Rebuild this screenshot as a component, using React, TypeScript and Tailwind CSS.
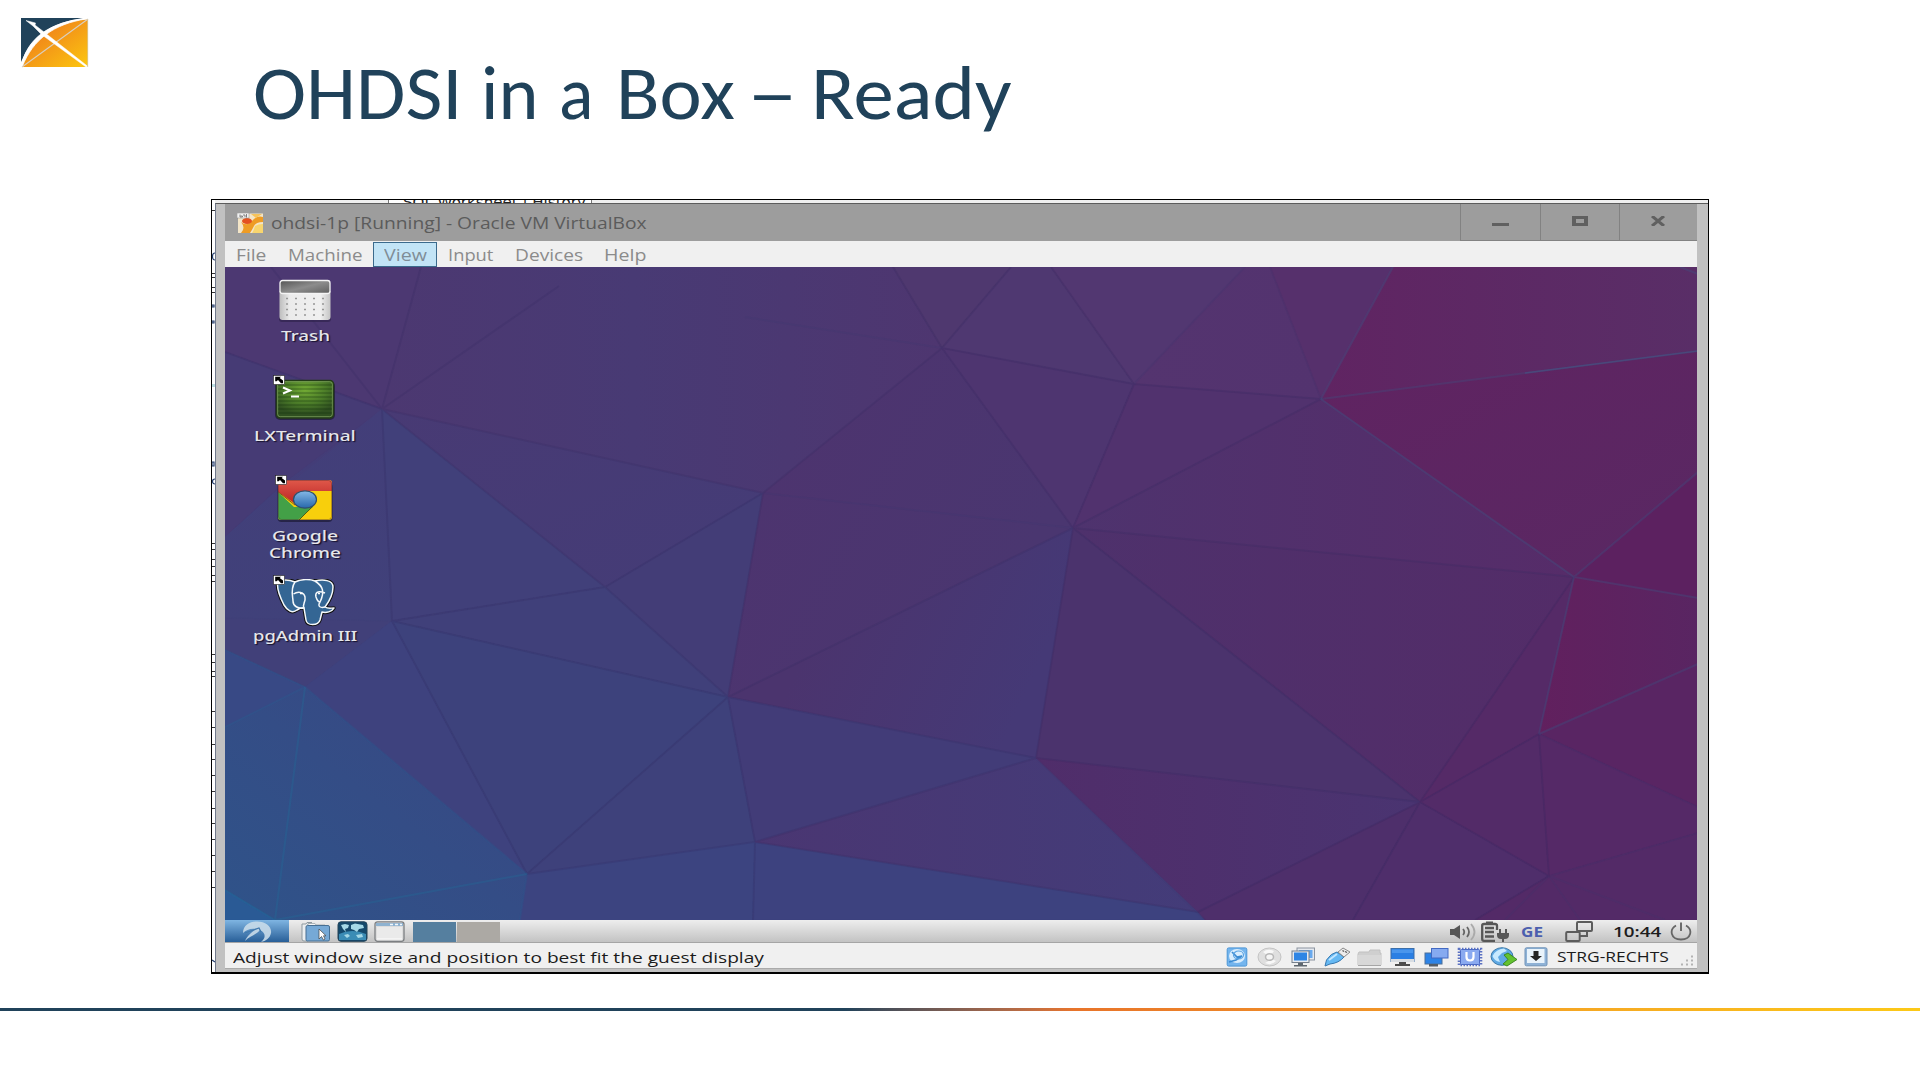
import { useLayoutEffect, useRef, useState } from "react";
import type { ReactNode } from "react";

/* A single line of text stretched horizontally to the width of its box. */
function Fit({ w, className = "", children }: { w: number; className?: string; children: ReactNode }) {
  const ref = useRef<HTMLSpanElement>(null);
  const [scale, setScale] = useState(1);
  useLayoutEffect(() => {
    if (ref.current) setScale(w / ref.current.offsetWidth);
  }, [w]);
  return (
    <span className={`block shrink-0 whitespace-nowrap ${className}`} style={{ width: w }}>
      <span ref={ref} className="inline-block origin-left" style={{ transform: `scaleX(${scale})` }}>
        {children}
      </span>
    </span>
  );
}

function Logo() {
  return (
    <svg width="68" height="50" viewBox="0 0 68 50" className="block">
      <defs>
        <linearGradient id="lg" x1="0" y1="0" x2="1" y2="1">
          <stop offset="0.2" stopColor="#ef7f1c" />
          <stop offset="1" stopColor="#fcc70f" />
        </linearGradient>
      </defs>
      <path d="M0 0H62Q15 6 0 44Z" fill="#20425a" />
      <path d="M1 49C7 22 28 4 67 1V49Z" fill="url(#lg)" />
      <path d="M0.5 48C5 22 28 3 66 0.8C32 6 12 22 1.5 48Z" fill="#fff" stroke="#fff" strokeWidth="0.8" />
      <path d="M1 49L67 1" stroke="#d9cfc2" strokeWidth="1.1" />
      <path d="M5 2.5L14.5 5L14 7L67 48.5L65 49L20.5 16.5L12 8Z" fill="#fff" stroke="#fff" strokeWidth="0.5" />
      <path d="M66.7 1V49" stroke="#d3c9a4" strokeWidth="0.8" />
    </svg>
  );
}

const FACETS: [string, string][] = [
  ["0,0 196,0 157,142 0,85", "#4c3872"],
  ["0,85 157,142 60,215 0,270", "#463b75"],
  ["157,142 167,354 0,351 0,270", "url(#gA)"],
  ["0,351 167,354 80,420 0,383", "#414079"],
  ["0,383 80,420 0,460", "#384985"],
  ["80,420 302,607 295,653 50,653 0,653 0,460", "url(#gB)"],
  ["0,623 50,653 0,653", "#2a5a95"],
  ["80,420 167,354 302,607", "#3e427e"],
  ["157,142 380,320 167,354", "#41407a"],
  ["157,142 538,226 380,320", "url(#gC)"],
  ["380,320 538,226 503,430", "#433d77"],
  ["167,354 380,320 503,430", "#40407a"],
  ["167,354 503,430 302,607", "#3d427c"],
  ["302,607 503,430 530,575", "#3e417b"],
  ["302,607 530,575 528,653 295,653", "#3c4480"],
  ["530,575 973,645 980,653 528,653", "#3d427f"],
  ["196,0 668,0 717,81 538,226 157,142", "url(#gD)"],
  ["668,0 786,0 717,81", "#4f386f"],
  ["786,0 826,0 909,117 717,81", "#4f3871"],
  ["826,0 1020,0 909,117", "#523771"],
  ["1020,0 1045,0 1096,132 909,117", "url(#gK)"],
  ["1045,0 1168,0 1096,132", "#56306c"],
  ["1168,0 1473,0 1473,84 1096,132", "url(#gE)"],
  ["1096,132 1473,84 1473,205 1349,310", "url(#gF)"],
  ["1349,310 1473,205 1473,331", "#5c2160"],
  ["1349,310 1473,331 1473,397 1314,467", "url(#gL)"],
  ["1314,467 1473,397 1473,540", "#592563"],
  ["538,226 717,81 848,261 503,430", "url(#gG)"],
  ["503,430 848,261 811,491", "url(#gH)"],
  ["503,430 811,491 530,575", "#423c78"],
  ["811,491 973,645 530,575", "url(#gM)"],
  ["717,81 909,117 848,261", "#4e3570"],
  ["909,117 1096,132 848,261", "#51326e"],
  ["848,261 1096,132 1349,310", "url(#gI)"],
  ["848,261 1349,310 1195,535", "url(#gN)"],
  ["848,261 1195,535 811,491", "#4b336d"],
  ["811,491 1195,535 973,645", "url(#gJ)"],
  ["973,645 1195,535 1128,653 980,653", "#4e2f6b"],
  ["1195,535 1324,609 1250,653 1128,653", "#4f2e6b"],
  ["1195,535 1349,310 1314,467", "#552a67"],
  ["1195,535 1314,467 1324,609", "#532b68"],
  ["1314,467 1473,540 1473,566 1324,609", "#552967"],
  ["1324,609 1473,566 1473,653 1250,653", "#532a67"],
];

const CREASES =
  "M157 142L46 0M157 142L196 0M157 142L334 19M157 142L0 85M157 142L538 226M157 142L380 320L503 430M157 142L167 354L380 320L538 226M167 354L503 430M167 354L302 607L503 430L530 575L302 607M530 575L528 653M530 575L811 491M530 575L973 645M503 430L538 226L717 81L668 0M717 81L786 0M717 81L909 117L826 0M909 117L1096 132L848 261L909 117M717 81L848 261L1349 310M848 261L1195 535L811 491L848 261L503 430L811 491M973 645L1195 535L1128 653M1349 310L1195 535L1314 467L1324 609L1195 535M1324 609L1250 653";

const FAINT_CREASES =
  "M717 81L520 50M848 261L538 226M1324 609L1280 653M1324 609L1355 653M1324 609L1440 653M811 491L980 653M1045 0L1096 132M1020 0L909 117M1314 467L1473 540M1324 609L1473 566";

const BLUE_CREASES =
  "M1168 0L1096 132L1349 310L1314 467M1349 310L1473 205M1349 310L1473 331M1314 467L1473 397M1455 0L1473 7";

function Wallpaper() {
  return (
    <svg width="1472" height="653" viewBox="0 0 1472 653" className="absolute inset-0">
      <defs>
        <linearGradient id="base" x1="0" y1="1" x2="1" y2="0">
          <stop offset="0" stopColor="#34508a" />
          <stop offset="0.5" stopColor="#483772" />
          <stop offset="1" stopColor="#5b2662" />
        </linearGradient>
        <linearGradient id="gA" x1="0" y1="0" x2="0" y2="1"><stop offset="0" stopColor="#433e79" /><stop offset="1" stopColor="#40417a" /></linearGradient>
        <linearGradient id="gB" x1="1" y1="0" x2="0" y2="1"><stop offset="0" stopColor="#394783" /><stop offset="1" stopColor="#2f5389" /></linearGradient>
        <linearGradient id="gC" x1="0" y1="0" x2="1" y2="1"><stop offset="0" stopColor="#483a74" /><stop offset="1" stopColor="#443c77" /></linearGradient>
        <linearGradient id="gD" x1="0" y1="0" x2="1" y2="0"><stop offset="0" stopColor="#4c3871" /><stop offset="0.45" stopColor="#483a74" /><stop offset="1" stopColor="#4e3670" /></linearGradient>
        <linearGradient id="gE" x1="0" y1="0" x2="1" y2="0"><stop offset="0" stopColor="#602462" /><stop offset="1" stopColor="#592e67" /></linearGradient>
        <linearGradient id="gF" x1="0" y1="0" x2="1" y2="1"><stop offset="0" stopColor="#602361" /><stop offset="1" stopColor="#592863" /></linearGradient>
        <linearGradient id="gG" gradientUnits="userSpaceOnUse" x1="540" y1="200" x2="780" y2="330"><stop offset="0" stopColor="#4d346f" /><stop offset="1" stopColor="#4a3670" /></linearGradient>
        <linearGradient id="gH" gradientUnits="userSpaceOnUse" x1="600" y1="340" x2="800" y2="430"><stop offset="0" stopColor="#4b346e" /><stop offset="1" stopColor="#453976" /></linearGradient>
        <linearGradient id="gI" x1="0" y1="0" x2="1" y2="0"><stop offset="0" stopColor="#4e336e" /><stop offset="1" stopColor="#562c69" /></linearGradient>
        <linearGradient id="gJ" x1="0" y1="0" x2="1" y2="0"><stop offset="0" stopColor="#502d6a" /><stop offset="1" stopColor="#4a3471" /></linearGradient>
        <linearGradient id="gK" x1="0" y1="0" x2="1" y2="0"><stop offset="0" stopColor="#54346f" /><stop offset="1" stopColor="#53336f" /></linearGradient>
        <linearGradient id="gL" x1="0" y1="0" x2="1" y2="0"><stop offset="0" stopColor="#61205e" /><stop offset="1" stopColor="#592562" /></linearGradient>
        <linearGradient id="gM" x1="0" y1="0" x2="1" y2="0"><stop offset="0" stopColor="#4a3672" /><stop offset="1" stopColor="#433c79" /></linearGradient>
        <linearGradient id="gN" x1="0" y1="0" x2="1" y2="0"><stop offset="0" stopColor="#4e316c" /><stop offset="1" stopColor="#532c68" /></linearGradient>
      </defs>
      <rect width="1473" height="653" fill="url(#base)" />
      {FACETS.map(([points, fill]) => (
        <polygon key={points} points={points} fill={fill} stroke={fill} strokeWidth="0.5" />
      ))}
      <g fill="none" strokeWidth="2">
        <path d={CREASES} stroke="#33285f" strokeOpacity="0.2" />
        <path d={FAINT_CREASES} stroke="#3a3a70" strokeOpacity="0.16" />
        <path d={BLUE_CREASES} stroke="#3d5583" strokeOpacity="0.34" />
        <path d="M1096 132L1473 84" stroke="#3d5583" strokeOpacity="0.3" />
        <path d="M1300 106L1473 84" stroke="#3f6690" strokeOpacity="0.4" strokeWidth="1.3" />
        <path d="M80 420L50 653L302 607M0 623L50 653" stroke="#1f709c" strokeOpacity="0.3" />
        <path d="M0 383L80 420L0 460M80 420L302 607L295 653" stroke="#22689a" strokeOpacity="0.18" />
      </g>
    </svg>
  );
}

function ShortcutMark() {
  return (
    <svg width="12" height="10" viewBox="0 0 12 10" className="absolute left-[-2px] top-[-4px]">
      <rect x="0.5" y="0.5" width="11" height="9" fill="#fff" stroke="#222" strokeWidth="0.6" />
      <path d="M2.2 1.8H8L6.7 3L10 5.5V8.3H8L5 5L3.6 6.3H2.2Z" fill="#000" />
    </svg>
  );
}

function TrashIcon() {
  return (
    <svg width="54" height="44" viewBox="0 0 54 44">
      <defs>
        <linearGradient id="tb" x1="0" x2="1"><stop offset="0" stopColor="#bdbdbd" /><stop offset="0.2" stopColor="#ebebeb" /><stop offset="0.8" stopColor="#f0f0f0" /><stop offset="1" stopColor="#c4c4c4" /></linearGradient>
        <linearGradient id="tt" x1="0" y1="0" x2="1" y2="1"><stop offset="0" stopColor="#555" /><stop offset="0.5" stopColor="#8c8c8c" /><stop offset="1" stopColor="#5f5f5f" /></linearGradient>
      </defs>
      <rect x="1" y="37" width="52" height="6" rx="3" fill="#2b1f48" opacity="0.6" />
      <path d="M1.5 12H52.5V38Q52.5 41 49.5 41H4.500Q1.500 41 1.500 38Z" fill="url(#tb)" />
      <rect x="2" y="1.500" width="50" height="13" rx="2.500" fill="url(#tt)" stroke="#f4f4f4" strokeWidth="1.300" />
      {[19.500, 25, 30.500, 36].map((y) => (
        <path key={y} d={`M8 ${y}h2M17 ${y}h2M26 ${y}h2M35 ${y}h2M44 ${y}h2`} stroke="#969696" strokeWidth="1.500" />
      ))}
    </svg>
  );
}

function TerminalIcon() {
  return (
    <svg width="60" height="42" viewBox="0 0 60 42">
      <defs>
        <radialGradient id="tg" cx="0.5" cy="0.25" r="0.65"><stop offset="0" stopColor="#72ab34" /><stop offset="0.6" stopColor="#4a7a28" /><stop offset="1" stopColor="#2f4f20" /></radialGradient>
      </defs>
      <rect x="0" y="2" width="60" height="39" rx="5" fill="#1c1838" opacity="0.7" />
      <rect x="1.500" y="1.500" width="57" height="37.500" rx="3.500" fill="url(#tg)" stroke="#243c19" strokeWidth="1.500" />
      <rect x="2.700" y="2.700" width="54.600" height="35" rx="2.500" fill="none" stroke="#86aa66" strokeWidth="0.7" />
      {[6, 10, 14, 18, 22, 26, 30, 34].map((y) => (
        <path key={y} d={`M3 ${y}H57`} stroke="#142f0b" strokeOpacity="0.32" strokeWidth="1.500" />
      ))}
      <path d="M8 8.500L15 11.500L8 14.500" fill="none" stroke="#fff" strokeWidth="2" />
      <path d="M16 17.500H24" stroke="#fff" strokeWidth="2" />
    </svg>
  );
}

function ChromeIcon() {
  return (
    <svg width="56" height="44" viewBox="0 0 56 44">
      <defs>
        <clipPath id="cc"><rect x="1" y="1" width="54" height="40" rx="3" /></clipPath>
        <linearGradient id="cb" x1="0" y1="0" x2="0" y2="1"><stop offset="0" stopColor="#85b9e6" /><stop offset="1" stopColor="#2767ab" /></linearGradient>
        <linearGradient id="cr" x1="0" y1="0" x2="0" y2="1"><stop offset="0" stopColor="#e15a4b" /><stop offset="1" stopColor="#bd2626" /></linearGradient>
      </defs>
      <rect x="0.500" y="4" width="55" height="39" rx="4" fill="#181630" opacity="0.65" />
      <g clipPath="url(#cc)">
        <rect width="56" height="42" fill="#f8cf0c" />
        <path d="M0 0H56V12H28L17 24L0 12Z" fill="url(#cr)" />
        <path d="M0 12L17 28L36 28L20 42H0Z" fill="#43a047" />
        <path d="M36 27L21 42" stroke="#4d5f17" strokeWidth="1" />
        <path d="M0 12L18 26" stroke="#6d3b1a" strokeWidth="0.800" />
      </g>
      <ellipse cx="28" cy="20.500" rx="11.500" ry="8.700" fill="url(#cb)" stroke="#31506c" strokeWidth="1.200" />
      <rect x="1.500" y="1.500" width="53" height="39" rx="3" fill="none" stroke="#513030" strokeOpacity="0.4" />
    </svg>
  );
}

function ElephantIcon() {
  const body =
    "M3 3C8 0 15 1 20 3C26 0 35 0 40 2C48 0 58 1 58 8C58 16 53 24 50 28C53 30 56 29 59 29C57 33 51 34 47 33L45 41C43 47 32 47 31 41L29 29C26 28 24 30 22 31C17 35 12 31 9 26C5 18 1 9 3 3Z";
  return (
    <svg width="62" height="48" viewBox="0 0 62 48">
      <path d={body} fill="#111" stroke="#111" strokeWidth="3.500" strokeLinejoin="round" />
      <path d={body} fill="#346694" stroke="#f4f8fb" strokeWidth="1.500" strokeLinejoin="round" />
      <path d="M20 3C15 10 18 18 18 22C18 27 23 30 29 29C27 25 31 23 30 18C29 13 23 12 18.500 15M40 2C48 7 50 13 45 23C42 28 46 29 50 28M50 14C42 11 40 14 41 18C42 21 43 23 45 23" fill="none" stroke="#f4f8fb" strokeWidth="1.500" />
      <path d="M25 14.500h3M43 14.500h2" stroke="#fff" strokeWidth="1.300" />
    </svg>
  );
}

function DesktopItem({ icon, lines, shortcut, iconClass }: { icon: ReactNode; lines: [string, number][]; shortcut?: boolean; iconClass: string }) {
  return (
    <div className="flex h-[100px] w-[120px] flex-col items-center">
      <div className={`relative shrink-0 ${iconClass}`}>
        {icon}
        {shortcut && <ShortcutMark />}
      </div>
      {lines.map(([t, w]) => (
        <Fit key={t} w={w} className="h-[17px] text-[15px] leading-[17px] font-medium text-[#e6e6ea] [text-shadow:1px_1px_1px_#15102a]">
          {t}
        </Fit>
      ))}
    </div>
  );
}

function TaskIcons() {
  return (
    <>
      <svg width="31" height="21" viewBox="0 0 31 21" className="ml-[11px]">
        <path d="M2 3V18Q2 20 4 20H8V3L12 1.500H7L6 3Z" fill="#ebeef0" stroke="#8f999f" />
        <path d="M8 2.500H15L16 4H25V7H8Z" fill="#f5f5f5" stroke="#9aa4aa" strokeWidth="0.800" />
        <rect x="6" y="4.500" width="23.500" height="15.500" rx="1.500" fill="#76a9d6" stroke="#466f93" />
        <path d="M19 8V18L21.500 15.500L23.500 19L25 18L23.500 14.800H26Z" fill="#fff" stroke="#444" strokeWidth="0.700" />
      </svg>
      <svg width="31" height="21" viewBox="0 0 31 21" className="ml-[6px]">
        <rect x="1" y="0.800" width="29" height="19.500" rx="3" fill="#14486b" stroke="#244459" />
        <path d="M2 13Q15 7 29 13V19H2Z" fill="#3b8cb5" />
        <path d="M4 4L8 3L12 4L11 7L8 8L9 11L6 8ZM14 4L18 2.500L26 4L27 7L22 8L20 11L17 9L14 8ZM7 14L11 13L13 15L10 17ZM19 14L25 13L26 16L21 17Z" fill="#a5d8e6" />
      </svg>
      <svg width="31" height="21" viewBox="0 0 31 21" className="ml-[6px]">
        <rect x="1" y="0.800" width="29" height="19.500" rx="2.500" fill="#dcdcdc" stroke="#7c7f82" strokeWidth="1.300" />
        <path d="M2 2H29V5H2Z" fill="#8eb2d0" />
        <path d="M16 3.500h3M21 3.500h3M26 3.500h2" stroke="#f2f7fb" strokeWidth="1.600" />
        <path d="M3 6H28V18H3Z" fill="#eaeaea" />
        <path d="M3 18H28" stroke="#fff" />
      </svg>
    </>
  );
}

function TrayIcon({ kind }: { kind: "volume" | "battery" | "network" | "power" }) {
  if (kind === "volume")
    return (
      <svg width="28" height="20" viewBox="0 0 28 20">
        <path d="M0 7H4L10 3V17L4 13H0Z" fill="#575757" />
        <path d="M13 7Q15.500 10 13 13M17 5Q21 10 17 15" fill="none" stroke="#666" strokeWidth="1.800" />
        <path d="M21 2Q28 10 21 18" fill="none" stroke="#aaa" strokeWidth="1.800" />
      </svg>
    );
  if (kind === "battery")
    return (
      <svg width="30" height="22" viewBox="0 0 30 22">
        <path d="M5 0.500H12V3H5Z" fill="#575757" />
        <path d="M16 9V4.500Q16 3 14 3H3Q1.200 3 1.200 4.500V18Q1.200 19.800 3 19.800H14" fill="none" stroke="#575757" strokeWidth="2.300" />
        <path d="M4 7H13M4 11H13M4 15.500H13" stroke="#575757" strokeWidth="2.400" />
        <path d="M16 12H28V14Q28 18 24 18H23V21H21V18H20Q16 18 16 14ZM18 8H20V12H18ZM24 8H26V12H24Z" fill="#575757" />
      </svg>
    );
  if (kind === "network")
    return (
      <svg width="28" height="21" viewBox="0 0 28 21">
        <rect x="12" y="1" width="15" height="9" rx="1" fill="none" stroke="#5c5c5c" strokeWidth="2" />
        <rect x="1.200" y="11" width="13.500" height="9" rx="1" fill="none" stroke="#5c5c5c" strokeWidth="2" />
        <path d="M22 10V15H15" fill="none" stroke="#5c5c5c" strokeWidth="2" />
      </svg>
    );
  return (
    <svg width="22" height="19" viewBox="0 0 22 19">
      <path d="M6 3.500C-1 7.500 0.500 17.500 11 17.500S23 7.500 16 3.500" fill="none" stroke="#666" strokeWidth="1.800" />
      <path d="M11 0.500V9" stroke="#666" strokeWidth="1.900" />
    </svg>
  );
}

function StatusIcons() {
  const s = "shrink-0";
  return (
    <div className="flex h-5 items-center">
      <svg width="22" height="20" viewBox="0 0 22 20" className={s}>
        <rect x="1.200" y="0.900" width="19.600" height="18.200" rx="1.500" fill="#74b5ee" stroke="#4b95d6" />
        <ellipse cx="11" cy="9" rx="8" ry="7" fill="#d9edfd" />
        <path d="M3 15L10 13L16 9L11 10L6 5" fill="none" stroke="#3b8bd2" strokeWidth="1.700" />
        <ellipse cx="12.500" cy="8" rx="5" ry="4" fill="none" stroke="#5aa3e2" strokeWidth="1.200" />
      </svg>
      <svg width="25" height="20" viewBox="0 0 25 20" className={`${s} ml-[9px]`}>
        <ellipse cx="12.500" cy="10" rx="11.500" ry="9" fill="#dfdfdf" stroke="#c4c4c4" />
        <path d="M6 5Q11 1 17 4L14 8H10ZM8 16Q14 19 19 14L15 12Z" fill="#f8f8f8" />
        <ellipse cx="12.500" cy="10" rx="4" ry="3.300" fill="#f5f5f5" stroke="#b8b8b8" strokeWidth="1.500" />
      </svg>
      <svg width="26" height="20" viewBox="0 0 26 20" className={`${s} ml-[8px]`}>
        <rect x="7" y="1" width="17.500" height="12" fill="#e5e9ef" stroke="#8b949f" />
        <rect x="9" y="3" width="13.500" height="8" fill="#68a9ee" />
        <rect x="2" y="4" width="17" height="11.500" fill="#e7ebf1" stroke="#76808c" />
        <rect x="4" y="5.500" width="13" height="8" fill="#2e85e4" />
        <path d="M8 16H13V18H17V19.500H4V18H8Z" fill="#5e676f" />
      </svg>
      <svg width="27" height="20" viewBox="0 0 27 20" className={`${s} ml-[8px]`}>
        <path d="M1 19L2.500 13Q7 6 13 5L20 10Q15 16 6 17Z" fill="#66b9f3" stroke="#3778b0" />
        <path d="M5 13L13 7" stroke="#c2e6ff" strokeWidth="2" />
        <path d="M14 5L19 1L26 5L20 10Z" fill="#ececec" stroke="#8a8a8a" />
        <path d="M18.500 3.500L20 4.500M21 4.500L23 5.500" stroke="#555" strokeWidth="1.300" />
      </svg>
      <svg width="26" height="20" viewBox="0 0 26 20" className={`${s} ml-[6px]`}>
        <path d="M2 5H12L13 3H23V6H24V18H1V7Z" fill="#cfcfcf" stroke="#c1c1c1" />
        <path d="M1 8H24V18H1Z" fill="#d8d8d8" />
        <path d="M1 18.500H24" stroke="#a6a6a6" />
      </svg>
      <svg width="25" height="20" viewBox="0 0 25 20" className={`${s} ml-[7px]`}>
        <rect x="1" y="1.500" width="23" height="13" fill="#2b7fe3" stroke="#3c6fa9" />
        <path d="M1 12H24V15H1Z" fill="#d8dde2" />
        <path d="M2 2.500H23V6H2Z" fill="#4a96ec" />
        <path d="M9 15H16V17H20V19H5V17H9Z" fill="#4d4d4d" />
      </svg>
      <svg width="26" height="20" viewBox="0 0 26 20" className={`${s} ml-[8px]`}>
        <rect x="2" y="6" width="17" height="11" fill="#2d83e6" stroke="#4c6f97" />
        <path d="M6 17H15V19.500H6Z" fill="#555d66" />
        <rect x="8.500" y="1.500" width="16.500" height="9.500" fill="#86aaf0" stroke="#4269c2" />
      </svg>
      <svg width="26" height="20" viewBox="0 0 26 20" className={`${s} ml-[8px]`}>
        <rect x="2" y="2" width="22" height="16" fill="none" stroke="#5a71c2" strokeWidth="2.600" strokeDasharray="1.500 1.500" />
        <rect x="3.500" y="2.500" width="19" height="15" rx="1" fill="#8aaaf0" stroke="#4c6ac4" />
        <path d="M9.500 5V10Q9.500 13.500 13 13.500T16.500 10V5" fill="none" stroke="#fff" strokeWidth="2.200" />
      </svg>
      <svg width="28" height="20" viewBox="0 0 28 20" className={`${s} ml-[7px]`}>
        <ellipse cx="12" cy="9.500" rx="11" ry="8.800" fill="#5fa9e4" stroke="#3d7aa8" />
        <path d="M2.500 9Q6 2 14 1.500L17 4L12 6L8 10L10 15Q4 14 2.500 9Z" fill="#c7eaff" />
        <path d="M14 8L18 6L27 12.500L17 19L13 17L18 12.500Z" fill="#63c22f" stroke="#34811c" strokeWidth="0.900" />
      </svg>
      <svg width="24" height="20" viewBox="0 0 24 20" className={`${s} ml-[6px]`}>
        <rect x="1" y="0.800" width="22" height="18" rx="1.500" fill="#8fb2d6" stroke="#7093b8" />
        <rect x="3" y="2" width="17.500" height="14" fill="#e9f3fb" />
        <path d="M9.500 4H14.500V9H18L12 14L6 9H9.500Z" fill="#252525" />
      </svg>
    </div>
  );
}

const TITLE: [string, number, string][] = [
  ["OHDSI", 210, ""],
  ["in", 57, "ml-[18px]"],
  ["a", 34, "ml-[21px]"],
  ["Box", 119, "ml-[23px]"],
  ["–", 51, "ml-[12px]"],
  ["Ready", 200, "ml-[13px]"],
];

const MENU: [string, number, string][] = [
  ["File", 31, "ml-[11px]"],
  ["Machine", 75, "ml-[21px]"],
  ["View", 43, ""],
  ["Input", 45, "ml-[11px]"],
  ["Devices", 68, "ml-[22px]"],
  ["Help", 43, "ml-[21px]"],
];

const LEFT_TICKS = [10, 73, 77, 87, 92, 343, 349, 359, 366, 375, 381, 454, 462, 471, 476, 511, 527, 544, 559, 575, 591, 608, 623, 639, 655, 671, 687];

export default function App() {
  return (
    <div className="flex h-[1080px] w-[1920px] flex-col overflow-hidden bg-white font-['Open_Sans','Noto_Sans',sans-serif]">
      <header className="flex h-[199px] shrink-0 items-start">
        <div className="ml-[21px] mt-[18px] w-[68px] shrink-0">
          <Logo />
        </div>
        <h1 className="ml-[164px] mt-[50px] flex font-['Carlito','Lato',sans-serif] text-[76px] leading-[86px] text-[#20425a]">
          {TITLE.map(([word, w, gap]) => (
            <Fit key={word} w={w} className={gap}>
              {word}
            </Fit>
          ))}
        </h1>
      </header>

      <main className="ml-[211px] flex h-[775px] w-[1498px] shrink-0 border border-b-2 border-black bg-white">
        <svg width="3" height="772" viewBox="0 0 3 772" className="shrink-0">
          {LEFT_TICKS.map((t) => (
            <rect key={t} y={t} width="3" height="1" fill="#333" />
          ))}
          <path d="M3 53Q0.500 53 0.500 56.500T3 60M0 105h2v2h-2zM0 121h2v2h-2zM0 262h2v4h-2zM3 279Q0.500 279 0.500 281.500T3 284M0 760L3 762" fill="none" stroke="#27406f" strokeWidth="1.200" />
          <rect y="184" width="3" height="3" fill="#bde0e4" />
        </svg>
        <div className="flex w-[1493px] shrink-0 flex-col">
          <div className="flex h-[3px] shrink-0 items-end overflow-hidden bg-[#efefef] pl-[173px]">
            <div className="flex h-[3px] w-[204px] items-end border-x border-[#777] bg-white pl-[14px]">
              <Fit w={183} className="h-[6px] font-['DejaVu_Sans'] text-[14px] leading-[10px] text-[#222]">
                SQL Worksheet | History
              </Fit>
            </div>
          </div>
          <section className="flex h-[769px] flex-col border-l border-t border-l-[#717a8c] border-t-[#5c5c5c] bg-[#c1c1c1] pl-[9px] pr-[11px]">
            <div className="flex h-[37px] shrink-0 items-center bg-[#9d9d9d]">
              <svg width="26" height="20" viewBox="0 0 26 20" className="ml-3 shrink-0">
                <rect x="1" y="0.500" width="25" height="19.500" fill="#f3e5c8" />
                <path d="M4 9Q10 14 15 8T26 4V9Q19 9 17 13T13 20H4Q9 15 4 9Z" fill="#ee9c25" />
                <path d="M18 13Q21 11 26 11V20H15Q17 17 18 13Z" fill="#f8d56e" />
                <path d="M14 1H25L19 5Z" fill="#f6c35a" />
                <ellipse cx="10" cy="8" rx="5" ry="3" fill="#e4501f" />
                <rect x="0" y="0" width="12" height="5" fill="#f3f3f3" stroke="#888" strokeWidth="0.500" />
                <path d="M3 1.500v2.500h2.500v-1h-2M7 1v2h3M9.500 1v3.500" fill="none" stroke="#777" strokeWidth="0.900" />
              </svg>
              <Fit w={376} className="ml-[8px] text-[16px] leading-[22px] text-[#5b5b5b]">
                ohdsi-1p [Running] - Oracle VM VirtualBox
              </Fit>
              <div className="ml-auto flex h-full text-[#555]">
                <div className="flex w-[80px] items-center justify-center border-b border-l border-[#828282]">
                  <div className="mt-1 h-[3px] w-[17px] bg-[#606060]" />
                </div>
                <div className="flex w-[79px] items-center justify-center border-b border-l border-[#828282] pb-[2px]">
                  <div className="h-[10px] w-[16px] border-x-4 border-y-3 border-[#606060]" />
                </div>
                <div className="flex w-[78px] items-center justify-center border-b border-l border-[#828282] pb-[2px]">
                  <svg width="16" height="10" viewBox="0 0 16 10" className="ml-[-1px]">
                    <path d="M2 0L14 10M14 0L2 10" stroke="#606060" strokeWidth="3" />
                  </svg>
                </div>
              </div>
            </div>

            <nav className="flex h-[26px] shrink-0 items-center bg-[#f0f0f0] pt-px text-[15.500px] leading-[24px] text-[#8b8b8b]">
              {MENU.map(([label, w, gap]) =>
                label === "View" ? (
                  <div key={label} className="ml-[10px] flex h-[25px] w-[64px] items-center justify-center self-start border border-[#3b6a8c] bg-[#c2e4f6] pt-px text-[#7f8d96]">
                    <Fit w={w}>{label}</Fit>
                  </div>
                ) : (
                  <Fit key={label} w={w} className={gap}>
                    {label}
                  </Fit>
                ),
              )}
            </nav>

            <div className="relative h-[653px] shrink-0 overflow-hidden">
              <Wallpaper />
              <div className="relative ml-[20px] flex flex-col pt-[12px] font-['Noto_Sans',sans-serif]">
                <DesktopItem icon={<TrashIcon />} iconClass="h-[48px] w-[54px]" lines={[["Trash", 49]]} />
                <DesktopItem icon={<TerminalIcon />} iconClass="h-[48px] w-[60px]" lines={[["LXTerminal", 102]]} shortcut />
                <DesktopItem icon={<ChromeIcon />} iconClass="h-[48px] w-[56px]" lines={[["Google", 66], ["Chrome", 72]]} shortcut />
                <DesktopItem icon={<ElephantIcon />} iconClass="h-[48px] w-[60px]" lines={[["pgAdmin III", 104]]} shortcut />
              </div>
            </div>

            <div className="flex h-[23px] shrink-0 items-center border-b border-[#a5a5a5] bg-linear-to-b from-[#eeeeee] via-[#d8d8d8] to-[#c3c3c3]">
              <div className="flex h-full w-[64px] items-center justify-center bg-linear-to-b from-[#7fb5e2] to-[#285f98]">
                <svg width="30" height="21" viewBox="0 0 30 21">
                  <path d="M1 12C1 4 8 0.500 15 0.500C24 0.500 30 6 29 12C28 17 24 20 19 21C24 17 24 12 18 9C14 14 8 15 3 20C5 15 10 11 14 8C9 7 4 9 1 12Z" fill="#c9dbe9" opacity="0.900" />
                  <path d="M3 12L17 7L19 11" fill="none" stroke="#4179ad" strokeWidth="1.300" />
                </svg>
              </div>
              <TaskIcons />
              <div className="ml-[8px] mt-[2px] h-[20px] w-[43px] bg-[#557f9f]" />
              <div className="ml-[1px] mt-[2px] h-[20px] w-[43px] bg-[#aca9a4]" />
              <div className="ml-auto flex h-full items-center pt-px">
                <TrayIcon kind="volume" />
                <div className="ml-[3px]"><TrayIcon kind="battery" /></div>
                <Fit w={22} className="ml-[10px] text-[14px] leading-[20px] font-bold text-[#4c5fae]">GE</Fit>
                <div className="ml-[22px]"><TrayIcon kind="network" /></div>
                <Fit w={48} className="ml-[20px] text-[14.500px] leading-[20px] font-semibold text-[#1d1d1d]">10:44</Fit>
                <div className="ml-[9px] mr-[5px]"><TrayIcon kind="power" /></div>
              </div>
            </div>

            <div className="flex h-[26px] shrink-0 items-center border-b border-[#aaa] bg-[#f0f0f0] pt-[2px] text-[15px] leading-[22px] text-[#1b1b1b]">
              <Fit w={531} className="ml-[8px]">Adjust window size and position to best fit the guest display</Fit>
              <div className="ml-auto flex items-center">
                <StatusIcons />
                <Fit w={112} className="ml-[9px] text-[14.500px]">STRG-RECHTS</Fit>
                <svg width="14" height="12" viewBox="0 0 14 12" className="ml-[11px] mr-[3px] mt-[8px]">
                  <path d="M11 1.500h2M6 5.500h2M11 5.500h2M1 9.500h2M6 9.500h2M11 9.500h2" stroke="#b3b3b3" strokeWidth="2" />
                </svg>
              </div>
            </div>
          </section>
        </div>
      </main>

      <div className="mt-[34px] h-[3px] shrink-0 bg-linear-to-r from-[#20425a] from-44% via-[#e8742a] via-56% to-[#fcc917]" />
    </div>
  );
}
